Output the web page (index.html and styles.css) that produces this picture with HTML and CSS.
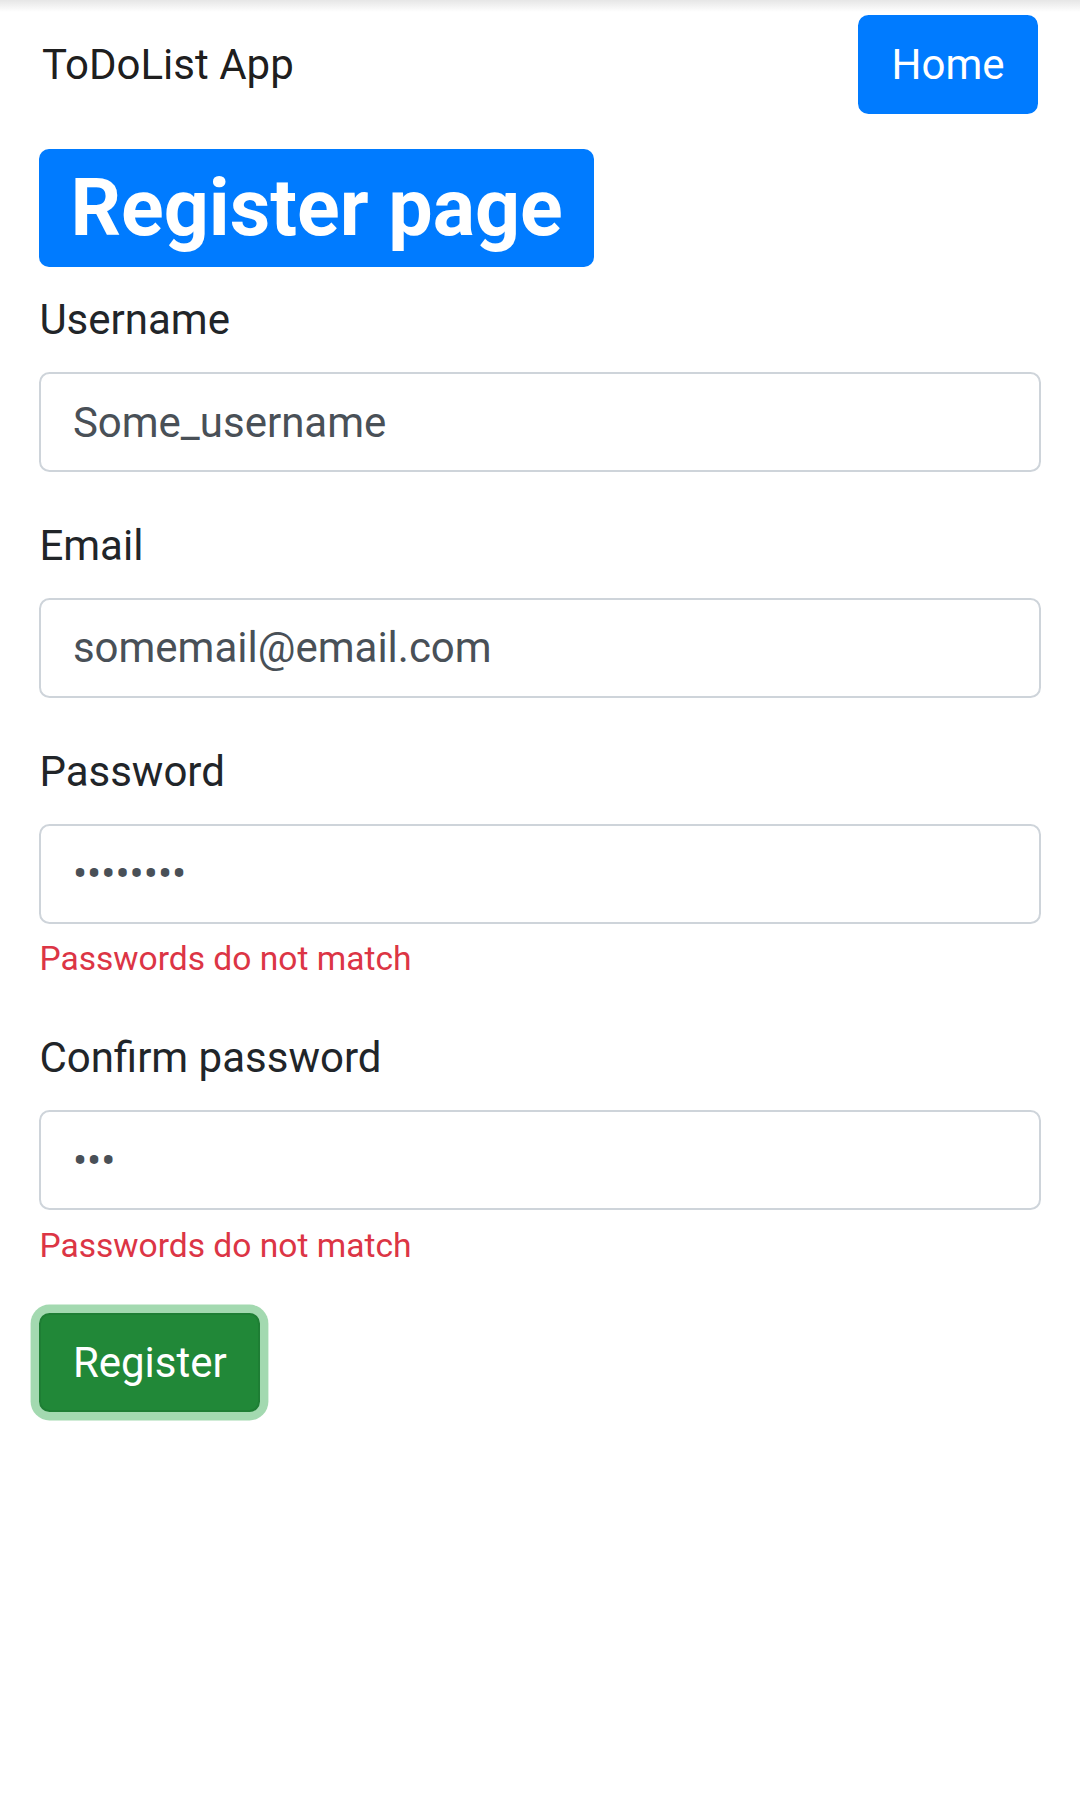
FILE: index.html
```html
<!DOCTYPE html>
<html lang="en">
<head>
<meta charset="utf-8">
<title>ToDoList App</title>
<link rel="stylesheet" href="styles.css">
</head>
<body>
<div class="top-shade"></div>
<nav class="navbar">
  <span class="brand">ToDoList App</span>
  <a class="btn btn-primary" href="#">Home</a>
</nav>
<main class="container">
  <h1 class="title">Register page</h1>
  <form class="form">
    <div class="form-group">
      <label class="label" for="username">Username</label>
      <input class="form-control" id="username" type="text" value="Some_username">
    </div>
    <div class="form-group">
      <label class="label" for="email">Email</label>
      <input class="form-control" id="email" type="email" value="somemail@email.com">
    </div>
    <div class="form-group">
      <label class="label" for="password">Password</label>
      <input class="form-control" id="password" type="password" value="12345678">
      <div class="invalid-feedback">Passwords do not match</div>
    </div>
    <div class="form-group">
      <label class="label" for="confirm">Confirm password</label>
      <input class="form-control" id="confirm" type="password" value="123">
      <div class="invalid-feedback">Passwords do not match</div>
    </div>
    <div class="actions">
      <button class="btn btn-success" type="button">Register</button>
    </div>
  </form>
</main>
</body>
</html>
```
FILE: styles.css
```css
html {
  font-size: 42px;
}
body {
  margin: 0;
  font-family: Roboto, "Liberation Sans", Arial, sans-serif;
  font-size: 1rem;
  line-height: 1.5;
  color: #212529;
  background: #fff;
}
.top-shade {
  position: absolute;
  top: 0;
  left: 0;
  right: 0;
  height: 12px;
  background: linear-gradient(#e6e6e6, rgba(255,255,255,0));
}
.navbar {
  display: flex;
  justify-content: space-between;
  align-items: center;
  padding: 15px 1rem 0.5rem;
}
.brand {
  color: rgba(0,0,0,0.9);
  font-size: 1rem;
  line-height: 1.5;
}
.btn {
  display: inline-block;
  font-family: inherit;
  font-size: 1rem;
  font-weight: 400;
  line-height: 1.5;
  padding: 0.375rem 0.75rem;
  border: 2.625px solid transparent;
  border-radius: 10.5px;
  text-decoration: none;
  text-align: center;
  cursor: pointer;
}
.btn-primary {
  color: #fff;
  background: #007bff;
  border-color: #007bff;
}
.btn-success {
  color: #fff;
  background: #218838;
  border-color: #1e7e34;
  box-shadow: 0 0 0 8.4px rgba(72,180,97,0.5);
}
.container {
  padding: 0 39.375px;
}
.title {
  width: fit-content;
  margin: 14px 0 0.5rem;
  padding: 12px 31px;
  font-size: 79px;
  font-weight: 700;
  line-height: 1.2;
  color: #fff;
  background: #007bff;
  border-radius: 10px;
}
.form-group {
  margin-bottom: 1rem;
}
.label {
  display: inline-block;
  margin-bottom: 0.5rem;
}
.form-control {
  display: block;
  box-sizing: border-box;
  width: 100%;
  height: 99.75px;
  margin: 0;
  padding: 0.375rem 0.75rem;
  font-family: inherit;
  font-size: 1rem;
  line-height: 1.5;
  color: #495057;
  background: #fff;
  border: 2.625px solid #ced4da;
  border-radius: 10.5px;
  outline: none;
}
.invalid-feedback {
  margin-top: 0.25rem;
  font-size: 80%;
  line-height: 1.5;
  color: #dc3545;
}
.actions {
  display: flex;
  padding-bottom: 20px;
}
```
